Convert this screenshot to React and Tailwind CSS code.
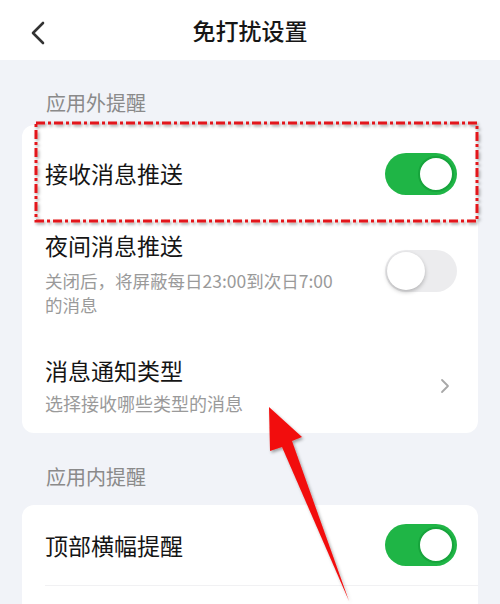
import React from "react";

const font = { fontFamily: '"Noto Sans CJK SC", "Noto Sans", sans-serif' };

const Toggle = ({ on }) =>
  on ? (
    <div className="w-[72px] h-[42px] rounded-full bg-[#1fb546] flex items-center justify-end pr-[3px] shrink-0">
      <div className="w-[36px] h-[36px] rounded-full bg-white border-2 border-[#17a43c]" />
    </div>
  ) : (
    <div className="w-[72px] h-[42px] rounded-full bg-[#ececee] flex items-center pl-[2px] shrink-0">
      <div className="w-[38px] h-[38px] rounded-full bg-white shadow-[0_2px_4px_rgba(0,0,0,0.25)]" />
    </div>
  );

export default function App() {
  return (
    <div style={font} className="relative w-[500px] h-[604px] overflow-hidden bg-[#f1f3f8]">
      {/* header */}
      <div className="h-[60px] bg-white flex items-center relative">
        <svg className="absolute left-[28px] top-[20px]" width="20" height="26" viewBox="0 0 20 26">
          <path d="M15 3 L5 13 L15 23" fill="none" stroke="#333" strokeWidth="2.6" strokeLinecap="round" strokeLinejoin="round" />
        </svg>
        <div className="w-full text-center text-[23px] font-medium text-[#161616]">免打扰设置</div>
      </div>

      {/* section 1 */}
      <div className="pl-[46px] pt-[29px] h-[65px] text-[20px] leading-[28px] text-[#8a8a8a]">应用外提醒</div>
      <div className="mx-[22px] bg-white rounded-[12px]">
        <div className="h-[97px] flex items-center justify-between pl-[23px] pr-[21px]">
          <span className="text-[23px] text-[#151515]">接收消息推送</span>
          <Toggle on />
        </div>
        <div className="flex justify-between pl-[23px] pr-[21px] pt-[9px] pb-[16px]">
          <div>
            <div className="text-[23px] leading-[28px] text-[#151515]">夜间消息推送</div>
            <div className="mt-[10px] text-[17.5px] leading-[24px] text-[#9a9a9a] w-[305px]">
              关闭后，将屏蔽每日23:00到次日7:00的消息
            </div>
          </div>
          <div className="mt-[19px]">
            <Toggle />
          </div>
        </div>
        <div className="flex items-center justify-between pl-[23px] pr-[28px] pt-[23px] pb-[18px]">
          <div>
            <div className="text-[23px] leading-[28px] text-[#151515]">消息通知类型</div>
            <div className="mt-[7px] text-[18px] leading-[24px] text-[#9a9a9a]">选择接收哪些类型的消息</div>
          </div>
          <svg width="10" height="16" viewBox="0 0 10 16">
            <path d="M2 2 L8 8 L2 14" fill="none" stroke="#a8a8a8" strokeWidth="1.8" strokeLinecap="round" strokeLinejoin="round" />
          </svg>
        </div>
      </div>

      {/* section 2 */}
      <div className="pl-[46px] pt-[30px] h-[72px] text-[20px] leading-[28px] text-[#8a8a8a]">应用内提醒</div>
      <div className="mx-[22px] bg-white rounded-[12px]">
        <div className="h-[80px] flex items-center justify-between pl-[23px] pr-[21px]">
          <span className="text-[23px] text-[#151515]">顶部横幅提醒</span>
          <Toggle on />
        </div>
        <div className="ml-[23px] border-t border-[#f1f1f3]" />
        <div className="h-[80px] flex items-center justify-end pl-[23px] pr-[21px]">
          <Toggle on />
        </div>
      </div>

      {/* annotations */}
      <svg className="absolute left-0 top-0 pointer-events-none" width="500" height="604" viewBox="0 0 500 604">
        <defs>
          <filter id="sh" x="-10%" y="-10%" width="130%" height="130%">
            <feDropShadow dx="1.5" dy="2" stdDeviation="1.5" floodColor="#000" floodOpacity="0.35" />
          </filter>
        </defs>
        <rect x="36" y="123" width="441" height="98" fill="none" stroke="#e3141c" strokeWidth="3" strokeDasharray="9 3 3 3" filter="url(#sh)" />
        <polygon points="269,407 302,437 292,441 349,601 282,447 270,451" fill="#f20d0d" filter="url(#sh)" />
      </svg>
    </div>
  );
}
